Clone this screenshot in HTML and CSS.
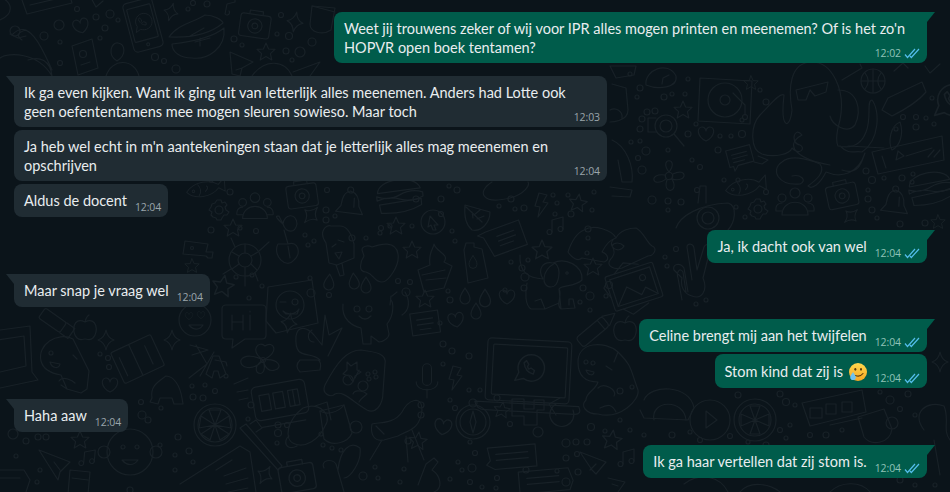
FILE: index.html
```html
<!DOCTYPE html>
<html lang="nl">
<head>
<meta charset="utf-8">
<title>Chat</title>
<link rel="stylesheet" href="styles.css">
</head>
<body>
<svg class="doodles" viewBox="0 0 950 492" aria-hidden="true">
  <defs>
    <path id="star5" d="M0-9 2.6-3 9-2.6 4.4 1.6 5.8 8 0 4.6-5.8 8-4.4 1.6-9-2.6-2.6-3Z"/>
    <path id="star4" d="M0-10Q1.5-2 8 0 1.5 2 0 10-1.5 2-8 0-1.5-2 0-10Z"/>
    <path id="heart" d="M0 7C-10 2-9-7-4-7-2-7 0-5 0-3 0-5 2-7 4-7 9-7 10 2 0 7Z"/>
    <path id="bolt" d="M-2-12 6-10 2-3 7-2-3 12-1 2-6 1Z"/>
    <path id="drop" d="M0-8C3-3 5-1 5 3A5 5 0 0 1-5 3C-5-1-3-3 0-8Z"/>
    <g id="note"><path d="M-4 7V-5L7-8V4"/><circle cx="-6.500" cy="7" r="2.500"/><circle cx="4.500" cy="4" r="2.500"/></g>
    <g id="camera"><rect x="-16" y="-11" width="32" height="24" rx="3"/><path d="M-7-11V-15H7V-11"/><circle cy="1" r="7.500"/><circle cy="1" r="3"/></g>
    <g id="msg"><path d="M-13-10H13V8H-4L-9 13V8H-13Z"/><path d="M-8-4H8M-8 0H8M-8 4H4"/></g>
    <g id="bell"><path d="M0-13C-8-11-8-3-9 2L-14 8 13 10 9 2C9-4 8-11 0-13Z"/><circle cy="-14" r="3"/><path d="M4-6V3"/></g>
    <g id="burger"><path d="M-21-6C-20-20 16-22 20-8Z"/><path d="M-22-3Q-11 2 0-3T22-4L22 0Q11 5 0 1T-22 1Z"/><path d="M-20 5 20 2V8Q4 16-19 13Z"/></g>
    <g id="gear"><circle r="4"/><path d="M-2-10H2L3-7 6-8 8-5 6-3 7 0 10 2 8 5 5 5 3 8 2 10H-2L-3 8-6 7-8 5-7 2-10 0-8-3-7-6-4-7Z"/></g>
    <g id="people"><circle cy="-13" r="5"/><circle cx="-13" cy="-8" r="4"/><circle cx="13" cy="-8" r="4"/><path d="M-13 9C-13-8 13-8 13 9Z"/><path d="M-13 5H-19C-20-2-15-3-13-3M13 5H19C20-2 15-3 13-3"/></g>
    <g id="fish"><path d="M-22 2C-12-10 8-9 16-2L24-9 23 7 16 2C6 12-14 12-22 2Z"/><circle cx="-14" cy="2" r="1.500"/><path d="M-8-5Q-3 2-8 8M2-2Q5 0 0 4"/></g>
    <g id="flower"><circle r="4"/><path d="M0-4C-12-20 12-20 0-4ZM4-2C20-10 20 8 3 3ZM3 3C12 18-8 20-2 4ZM-3 3C-18 14-22-4-4-1Z"/></g>
    <g id="mic"><rect x="-5" y="-18" width="10" height="24" rx="5"/><path d="M-12 2C-12 14 12 14 12 2M0 10V20"/></g>
    <g id="wa"><path d="M-11 11-8 4A11 11 0 1 1-4 9Z"/><path d="M-4-4C-3 2 0 4 4 5L5 2 2 0 0 1-1-1 0-3-2-6Z"/></g>
    <g id="compass"><circle cy="2" r="17"/><circle cy="2" r="13"/><circle cy="-17" r="4"/><path d="M0-9 3 2 0 13-3 2Z"/></g>
    <g id="apple"><path d="M0-6C-12-12-14 4-8 10-5 13-2 11 0 11 2 11 5 13 8 10 14 4 12-12 0-6ZM0-6Q1-11 4-13"/></g>
  </defs>
  <g class="ink">
    <path d="M-2-4C14 2 14 14 0 20M22 0 27 14 72 3 70-4M30 5 60-2M90-4 96 7 103 1"/>
    <path d="M12 35C30 15 45 55 52 70M52 76C38 52 8 52 0 58M26 36 18 38 10 34M26 30C18 32 16 36 22 40M52 76C50 60 40 56 28 60"/>
    <use href="#heart" transform="translate(81 26) rotate(-15)"/>
    <path d="M72 46 92 39 98 68 78 75Z"/><circle cx="83" cy="54" r="3.500"/><path d="M81 65 90 62"/>
    <path d="M117 61C107 55 111 42 118 43 125 44 127 55 117 61ZM106 76C112 58 134 58 139 76"/>
    <g transform="translate(143 25) rotate(-15)"><rect x="-15" y="-25" width="30" height="50" rx="4"/><rect x="-12" y="-19" width="24" height="34" rx="1"/><circle cy="20" r="1.500"/><use href="#wa" transform="translate(0 -3) scale(.75)"/></g>
    <use href="#star4" transform="translate(171 12) rotate(15) scale(.9)"/>
    <path d="M169 37C178 24 195 22 205 15 214 15 222 20 223 23 210 34 190 38 169 37ZM172 44C190 42 212 38 224 28 226 48 208 60 192 58 180 58 172 52 172 44ZM190 36 204 28M195 42 210 38M200 46V38"/>
    <path d="M225 14 227 4 235 2 235-3M225 14A2 2 0 1 0 229 11"/>
    <use href="#camera" transform="translate(255 25) rotate(8) scale(.95)"/>
    <path d="M312 6 335 8 331 30C322 36 310 32 310 24Z"/><path d="M312 6 335 12"/>
    <use href="#star4" transform="translate(295 22) rotate(10)"/>
    <use href="#star5" transform="translate(266 52)"/>
    <path d="M230 52 253 62 242 68 240 76 232 74ZM242 68 236 70"/>
    <path d="M252 76C265 58 285 60 292 76M293 72 320 62 310 76"/>
    <path d="M610 66 636 66 634 75 616 78Z"/><path d="M646 85C644 70 668 60 676 76 678 88 658 90 646 85ZM662 84 663 78 669 75"/>
    <path d="M612 84 626 88 628 110C628 122 610 122 610 122M610 110A8 8 0 0 1 622 118"/>
    <path d="M700 78 752 81 750 124 698 121Z"/><circle cx="725" cy="100" r="17"/><circle cx="725" cy="100" r="5"/><path d="M733 93 745 105V115"/><circle cx="745" cy="117" r="2.500"/>
    <use href="#star5" transform="translate(751 83) scale(.8)"/>
    <use href="#star5" transform="translate(683 110)"/>
    <use href="#heart" transform="translate(706 134)"/>
    <g transform="translate(664 126)"><circle cx="2" r="11"/><circle cx="2" r="6"/><path d="M10 8 20 20M-8-8H-16V6H-8"/><circle cx="-22" cy="-7" r="3"/><circle cx="-17" cy="-14" r="3"/><circle cx="-9" cy="-15" r="3"/><circle cx="-24" cy="3" r="3"/></g>
    <use href="#flower" transform="translate(669 176) scale(.95)"/>
    <path d="M612 140C626 146 634 166 632 182H622L618 160M610 187 632 190 630 197 612 196"/>
    <use href="#msg" transform="translate(740 157) rotate(-15) scale(.95)"/>
    <path d="M758 156 768 160 762 164 754 162"/>
    <use href="#fish" transform="translate(745 186) rotate(-8) scale(.9)"/>
    <use href="#gear" transform="translate(758 209)"/>
    <use href="#people" transform="translate(795 206)"/>
    <use href="#camera" transform="translate(842 195) rotate(-12) scale(.95)"/>
    <use href="#bell" transform="translate(895 203) rotate(3)"/>
    <use href="#star4" transform="translate(851 216) rotate(45) scale(.9)"/>
    <use href="#burger" transform="translate(931 190) rotate(-8)"/>
    <path d="M792 110C788 88 790 62 812 62 832 62 846 90 840 120 836 134 836 142 838 146 848 148 860 148 866 132 872 118 866 100 872 100 880 110 880 140 862 152 854 150 850 156 840 146M792 110C790 130 780 130 784 95 780 92 770 105 760 115 750 126 750 150 762 154 775 158 790 154 792 148 800 156 806 148 800 145 790 144 794 125 802 135 782 146 800 160 830 165"/>
    <path d="M796 90 828 82 826 92 815 96 810 90 806 100 798 100ZM838 90C858 90 862 110 855 125 846 135 832 124 830 116"/>
    <path d="M842 170C860 176 862 160 865 153 858 175 840 178 826 172 820 184 812 190 808 186 816 180 826 172 820 164 806 158 790 155 782 162 770 170 778 186 800 184 808 180 800 174 792 176"/>
    <path d="M848 146 884 148M842 80 862 68 860 64"/>
    <g transform="translate(873 81)"><circle r="12"/><path d="M-12 0H12M0-12V12M-8-8C-4-3-4 3-8 8M8-8C4-3 4 3 8 8"/></g>
    <path d="M882 110 888 98 922 82 926 92C916 104 900 112 892 116Z"/>
    <path d="M900 122C890 126 888 142 892 150 900 146 904 134 900 122Z"/><circle cx="896" cy="129" r="2"/>
    <path d="M872 152 942 136 944 160 878 174ZM882 156 886 168M896 160 904 156 898 151ZM906 156 932 148M928 157 934 150M934 157 940 150"/>
    <use href="#wa" transform="translate(950 100) scale(1.4)"/>
    <path d="M894 71 903 63 908 68M925 66 930 73 940 64"/>
    <use href="#star5" transform="translate(938 222) scale(.8)"/>
    <path d="M676 228C680 216 700 204 728 203 738 206 735 222 728 230M698 203 700 186 706 186 706 203"/><circle cx="708" cy="218" r="11"/><circle cx="708" cy="218" r="6"/>
    <path d="M492 182C476 192 482 205 510 198 525 194 530 185 528 182"/>
    <use href="#fish" transform="translate(205 188) rotate(-8) scale(.85)"/>
    <use href="#people" transform="translate(255 210) scale(.95)"/>
    <use href="#camera" transform="translate(302 195) rotate(-8) scale(.95)"/>
    <use href="#bell" transform="translate(350 204) rotate(3)"/>
    <use href="#burger" transform="translate(400 198) rotate(-5) scale(1.05)"/>
    <use href="#gear" transform="translate(219 210)"/>
    <use href="#star5" transform="translate(233 228)"/>
    <use href="#star4" transform="translate(311 215) rotate(40)"/>
    <g transform="translate(433 222)"><circle r="12"/><path d="M-3-6 5 3 1 3 3 8 0 8-2 3-5 5Z"/></g>
    <use href="#star5" transform="translate(396 226)"/>
    <g transform="translate(245 260)"><circle r="16"/><circle r="7"/><path d="M-6-4-13-8M6-4 13-8M-6 4-13 9M6 4 12 10M0-7V-16M0 7V16M14-9 24-18M-14 9-22 14M-10-13-14-22M10 13 13 21M0 16V26"/></g>
    <path d="M185 241 208 244 206 252 213 252 212 258 208 258 206 256 183 254Z"/><circle cx="192" cy="248" r="1.500"/>
    <path d="M283 224C284 214 296 212 297 224 295 234 286 233 283 224ZM283 224C274 216 276 216 279 216ZM278 244C272 255 286 270 294 260 302 254 298 240 288 244ZM288 244 284 230M288 246 290 258"/>
    <path d="M326 243C318 232 326 224 331 226L340 226C348 226 352 236 354 244L354 258 337 265 329 263ZM336 265 340 276 344 275 342 263M332 247 336 244M338 240 344 242M335 253 342 252 339 259Z"/>
    <path d="M362 250C362 246 368 245 372 247 380 244 396 240 398 254 400 266 388 282 382 282 374 282 374 274 366 272 358 272 360 262 364 256Z"/>
    <use href="#star5" transform="translate(412 250)"/>
    <path d="M430 265C428 252 434 248 434 244 436 252 450 254 444 262L452 266 444 288 424 292 418 270Z"/><path d="M422 275 445 270M426 280 446 278"/>
    <use href="#star5" transform="translate(223 286) rotate(10) scale(1.2)"/>
    <use href="#star5" transform="translate(192 266) scale(.8)"/>
    <g transform="translate(290 305)"><path d="M-22-18 22-25 28 18-14 28-24 16Z"/><circle cy="0" r="14"/><circle cx="5" cy="-3" r="3"/><path d="M-10-3-4-3M-7 6C-3 10 5 10 9 4L7 9H-4Z"/></g>
    <use href="#drop" transform="translate(329 282) rotate(5)"/>
    <use href="#drop" transform="translate(354 281) rotate(-5)"/>
    <use href="#drop" transform="translate(366 285)"/>
    <use href="#star5" transform="translate(425 299)"/>
    <path d="M391 296 390 305M392 296 397 292M405 292C410 300 410 310 402 315"/>
    <path d="M465 205 490 212C490 222 482 232 472 230 466 225 464 215 465 205ZM466 207 482 222M474 215 480 210M477 219 484 216M472 212 473 218"/>
    <use href="#bolt" transform="translate(541 205)"/>
    <use href="#star5" transform="translate(578 203) rotate(8)"/>
    <use href="#note" transform="translate(556 225)"/>
    <g transform="translate(507 238) rotate(-20)"><path d="M-18-13H17V13H-18L-22-8 -27-12Z"/><path d="M-9-5H9M-9 0H9M-9 5H5"/></g>
    <path d="M466 243H474V247L482 249 488 278 468 283 464 250Z"/>
    <use href="#drop" transform="translate(473 262) scale(.8)"/>
    <use href="#star5" transform="translate(542 250) scale(1.1)"/>
    <use href="#drop" transform="translate(465 296)"/>
    <use href="#drop" transform="translate(485 298) scale(1.1)"/>
    <use href="#drop" transform="translate(476 311)"/>
    <use href="#heart" transform="translate(507 297)"/>
    <use href="#heart" transform="translate(456 320) rotate(-10)"/>
    <g transform="translate(565 275)"><path d="M-45-20C-46-2-36 3-22 4M-22 4C-28-6-22-14-12-12 0-18 18-10 17 5 10 12-4 10-6 14-2 20-10 30-4 34L10 33 8 24 4 24 4 30M-6 14-4 34M-38 8C-40 18-40 30-34 34L-20 34-24 24-30 26M-20 34-6 28"/><path d="M-10-12C-3-6-6 12-14 12-24 12-24-4-10-12Z"/><circle cx="2" cy="-2" r="1.200"/></g>
    <use href="#star5" transform="translate(593 267)"/>
    <g transform="translate(616 240)"><path d="M0-2C-4-10-22-16-32-10-42-6-46 6-48 12-44 18-38 22-34 18L-12 22C-6 20-8 14-14 12-12 8-8 0 0-2ZM0-2C4-10 14-12 20-12 28-8 30 2 36 6 42 8 38 16 32 16L6 28C-2 30-10 26-6 20-2 16 0 12-4 6-6 2-2-2 0-2ZM-4 6C0 12 6 10 8 6 4 2-2 2-4 6"/></g>
    <g transform="translate(633 287) rotate(-18)"><rect x="-24" y="-18" width="50" height="36" rx="2"/><rect x="-20" y="-14" width="42" height="28"/><path d="M-20 14-6-2 6 10 12 4 22 14"/><circle cx="12" cy="-6" r="3"/><path d="M-24-12-28-8-24 4M-16 18-8 26 10 20M-14-18-2-26 12-20"/></g>
    <path d="M684 268 688 292M686 292 683 272C680 267 676 272 678 278L682 300M692 280 687 247C687 243 693 243 694 248L697 270 704 247C706 243 710 244 710 250L703 278C708 290 702 300 692 296 684 294 680 286 682 278L674 270C672 264 680 262 684 268"/>
    <path d="M226 305H262Q266 305 266 309V335Q266 339 262 339H245L232 348 233 339H226Q222 339 222 335V309Q222 305 226 305Z"/>
    <path d="M232 315V330M243 315V330M232 322H243M250 315V330M250 311V312"/>
    <circle cx="195" cy="320" r="16"/><use href="#heart" transform="translate(189 316) scale(.5)"/><use href="#heart" transform="translate(201 315) scale(.5)"/><path d="M189 325C194 331 200 330 203 325Z"/>
    <use href="#star4" transform="translate(289 323) rotate(10)"/>
    <path d="M320 360C310 350 294 362 296 336 298 324 308 328 314 335L322 345 325 315 329 335 342 328 328 356M300 360H318Q322 362 320 370L300 372Q294 366 300 360Z"/>
    <path d="M312 330C306 334 308 342 314 342"/>
    <g transform="translate(365 314)"><path d="M-22-10C-24 6-12 12-4 14L-2 30 6 30 6 22 14 28C18 28 24 24 24 20L22 10C30 0 28-12 26-14"/><circle cx="-8" cy="-5" r="3"/><circle cx="4" cy="-5" r="3"/><path d="M-6 2C-2 6 2 6 6 2"/></g>
    <g transform="translate(425 322) rotate(-8)"><path d="M-14-10H14V12H-14Z"/><path d="M-8-3H8M-8 2H8M-6 7H5"/></g>
    <path d="M190 345 208 350 192 355M196 345 207 364 189 378M214 352 200 376M215 360 226 362 227 366"/>
    <path d="M206 374 213 356H219L226 374 220 378 218 371H214L212 378Z"/>
    <g transform="translate(263 360)"><circle r="2.500"/><path d="M0 0C-14-10-4-20 2-14 10-20 18-8 0 0 16-2 20 8 12 10 6 12 2 8 0 0 4 12-2 16-6 12-8 8-6 4 0 0-10 12-24 8-22 0-18-6-8-4 0 0"/></g>
    <use href="#mic" transform="translate(427 380) scale(.9)"/>
    <use href="#bolt" transform="translate(455 378)"/>
    <g transform="translate(355 380)"><path d="M-30 5C-18-18-8-30 6-30 22-28 32-26 30-16L28 12C28 26 20 34 12 30-2 22-12 10-20 14-24 18-34 14-30 5Z"/><path d="M-8-18-4-14 2-18 2-10 6-8 0-4-2 2-6-4-12-6-8-10Z"/><circle cx="-7" cy="0" r="5"/><circle cx="8" cy="6" r="5"/><path d="M-2 14C0 8 10 12 12 14 8 18 6 18 4 22"/><path d="M4-10 0-2"/><circle cx="13" cy="-6" r="2"/><circle cx="20" cy="-8" r="2"/><circle cx="14" cy="-1" r="2"/><circle cx="21" cy="-3" r="2"/></g>
    <g transform="translate(280 400) rotate(-10)"><rect x="-27" y="-17" width="54" height="34" rx="5"/><path d="M-22 24H22"/><path d="M-20-8H-10V8H-20ZM-6-8H4V8H-6ZM9-8H19V8H9ZM14-8V8"/></g>
    <path d="M234 384 248 378M237 392 248 390M239 400 248 398"/>
    <g transform="translate(215 425)"><circle r="21"/><circle r="17"/><path d="M0 0-6-15 6-15ZM0 0 14-9 16 3ZM0 0 14 9 5 15ZM0 0-5 15-14 9ZM0 0-16 3-14-9Z"/></g>
    <g transform="translate(258 448)"><path d="M-18-20-12-24 24 18 20 22Z"/><path d="M-8-24-2-28 4-20-2-16"/></g>
    <g transform="translate(305 432)"><path d="M-2-24C14-30 28-18 20-6 14 8 0 16-10 12-22 8-18-12-2-24ZM-16 4C-22 8-20 20-8 14M10-26 22-30 26-12"/></g>
    <g transform="translate(338 425)"><path d="M-18-14 6-20 14 8C10 18-6 22-14 14Z"/><path d="M-18-14C-12-10 0-12 6-20"/><circle cx="18" cy="2" r="6"/></g>
    <g transform="translate(394 430)"><path d="M-22-6C-24 4-20 12-10 10L4 6C14 0 26 0 28-20 28-36 14-30 8-18 0-6-14-8-22-6ZM-12 10-24 30M30 30 18 0M12 6 14 32M-18-4-10 4"/></g>
    <use href="#star5" transform="translate(418 441) rotate(6)"/>
    <use href="#heart" transform="translate(443 427) rotate(8) scale(1.1)"/>
    <use href="#compass" transform="translate(473 420)"/>
    <path d="M180 484 240 446 250 452 256 492M216 470 232 460M224 476 246 468M226 484 248 478M228 492 248 488"/>
    <use href="#star4" transform="translate(265 475) rotate(30)"/>
    <use href="#camera" transform="translate(297 477) rotate(-10) scale(1.1)"/>
    <path d="M324 468C320 460 332 458 336 464L344 492M338 470C340 450 350 440 360 448 362 462 350 478 344 478"/>
    <path d="M418 485 426 464 434 458 438 462 432 470C440 475 444 488 434 492"/>
    <g transform="translate(530 380) rotate(3)"><rect x="-44" y="-40" width="84" height="62" rx="4"/><rect x="-38" y="-34" width="74" height="50" rx="1"/><path d="M-54 24H50Q54 32 46 32H-44Q-52 32-54 24Z"/><use href="#wa" transform="translate(-2 -12) scale(1.2)"/></g>
    <g transform="translate(595 330) rotate(-40)"><rect x="-20" y="-6" width="34" height="12" rx="3"/><path d="M14-6 26 0 14 6M8-6V6"/></g>
    <use href="#apple" transform="translate(625 329)"/>
    <g transform="translate(600 370)"><path d="M-14 30C-20 36-14 44-2 44 20 50 40 30 38 20 30-2 32-4 18-18 4-30-22-28-22-8-22 4-16 12-2 12-4 20-14 22-14 30ZM14-8 18-18"/><circle cx="-14" cy="-8" r="2"/><circle cx="-7" cy="-7" r="2"/><path d="M-14 0-6 2C-6 6-12 6-14 0ZM6-4 12 0M-2 18C4 12 18 20 14 26M0 38C8 34 12 34 16 42"/></g>
    <use href="#star5" transform="translate(502 410) rotate(8) scale(.9)"/>
    <path d="M512 399H524V409H534V400H544V410H537V425H524V416H512Z"/>
    <path d="M573 410A12 12 0 1 1 556 404M560 398 549 404 556 415"/>
    <g transform="translate(512 456) rotate(-5)"><path d="M-24-10H24V12H-18L-26 7-22 3Z"/><path d="M-16-3H16M-16 3H16"/></g>
    <g transform="translate(543 480) rotate(-5)"><path d="M-24-10H26L30 3 26 12H-24Z"/><path d="M-16-3H16M-16 3H16"/></g>
    <use href="#star5" transform="translate(612 440) rotate(8) scale(1.1)"/>
    <path d="M580 452 606 462 596 474 592 470ZM596 464 590 470"/>
    <use href="#note" transform="translate(627 457)"/>
    <path d="M608 478 625 482 618 492M612 484 618 486"/>
    <path d="M644 400C650 384 690 384 694 408L688 420 644 418 640 410"/><path d="M654 420C650 400 684 398 686 420"/>
    <circle cx="710" cy="420" r="20"/><path d="M706 411 717 420 706 428Z"/>
    <circle cx="755" cy="420" r="21"/><circle cx="755" cy="420" r="16"/><path d="M755 420 750 406H760ZM755 420 769 414 769 426ZM755 420 760 434H750ZM755 420 741 426V414Z"/>
    <path d="M802 403 862 390 866 412 810 426ZM830 425 862 418M810 408H822V418H810ZM826 404H836V414H826ZM842 402H852V412H842Z"/>
    <g transform="translate(872 425)"><path d="M-14-8 12-16 20 4C18 18 0 22-8 12Z"/><circle cx="20" cy="-2" r="6"/></g>
    <path d="M924 430C910 412 928 400 944 406 950 420 942 430 950 440M934 440 940 475"/>
    <use href="#star4" transform="translate(940 362)"/>
    <path d="M684 484C700 472 720 476 728 492M740 492C750 480 770 484 780 492M830 492C840 482 860 480 870 492"/>
    <path d="M0 330 30 326 32 372 38 380 0 388M-2 340 24 336 26 366 0 372"/>
    <g transform="translate(55 322) rotate(35)"><rect x="-16" y="-6" width="26" height="12" rx="2"/><path d="M10-6 20-6 20 6 10 6"/></g>
    <use href="#apple" transform="translate(85 328)"/>
    <use href="#star4" transform="translate(106 340)"/>
    <use href="#star4" transform="translate(172 340)"/>
    <g transform="translate(65 365)"><path d="M-24-4C-28-20-8-34 8-26L14-14 24 6 22 24 16 28 2 24-4 10C-16 8-22 4-24-4ZM2 24-4 20"/><circle cx="-14" cy="-12" r="2"/><path d="M-15-3-5-1C-6 4-13 4-15-3ZM8-10 12-6M-6 16C-2 10 8 16 10 18"/></g>
    <g transform="translate(138 360) rotate(-25)"><rect x="-22" y="-18" width="44" height="34" rx="2"/><path d="M-2-18V16M-16-10V10M12-10 12 10"/></g>
    <use href="#heart" transform="translate(110 385)"/>
    <path d="M152 398C150 386 158 382 166 376 174 376 180 386 182 398L183 404 174 404 172 398 160 398 158 404 150 402Z"/>
    <g transform="translate(130 452)"><circle r="23"/><circle cx="-26" cy="0" r="6"/><circle cx="26" cy="0" r="6"/><circle cx="-7" cy="-5" r="2"/><circle cx="7" cy="-5" r="2"/><path d="M-8 8C-3 14 4 14 8 8Z"/></g>
    <use href="#star5" transform="translate(80 440)"/>
    <path d="M39 450 70 462 60 472 58 480ZM54 462 60 470"/>
    <use href="#note" transform="translate(88 457) rotate(5) scale(.95)"/>
    <path d="M70 470 90 472 88 494 68 494ZM72 478 88 480"/>
    <path d="M0 470H24L30 480 26 492M0 478H20"/>
    <g class="dots">
      <circle cx="15" cy="31" r="5"/><circle cx="44" cy="36" r="4"/><circle cx="59" cy="25" r="5"/><circle cx="77" cy="9" r="2.500"/><circle cx="110" cy="14" r="4"/><circle cx="96" cy="17" r="3"/><circle cx="105" cy="28" r="3"/><circle cx="118" cy="20" r="2"/><circle cx="100" cy="38" r="2"/><circle cx="155" cy="57" r="3.500"/><circle cx="164" cy="61" r="2.500"/><circle cx="176" cy="69" r="4"/><circle cx="193" cy="3" r="2.500"/><circle cx="207" cy="4" r="3"/><circle cx="188" cy="9" r="2"/><circle cx="234" cy="39" r="3"/><circle cx="242" cy="45" r="2"/><circle cx="281" cy="15" r="2.500"/><circle cx="277" cy="34" r="2"/><circle cx="289" cy="36" r="3.500"/><circle cx="312" cy="42" r="4"/><circle cx="286" cy="51" r="3"/><circle cx="300" cy="52" r="5"/><circle cx="292" cy="60" r="2"/><circle cx="60" cy="63" r="2.500"/><circle cx="60" cy="42" r="2"/>
      <circle cx="630" cy="74" r="2"/><circle cx="640" cy="88" r="3"/><circle cx="637" cy="97" r="2"/><circle cx="664" cy="97" r="3"/><circle cx="672" cy="94" r="2"/><circle cx="688" cy="79" r="2"/><circle cx="685" cy="94" r="2"/><circle cx="766" cy="102" r="3"/><circle cx="760" cy="90" r="2"/><circle cx="668" cy="150" r="2"/><circle cx="696" cy="124" r="2"/><circle cx="688" cy="134" r="3"/><circle cx="631" cy="142" r="2"/><circle cx="640" cy="141" r="2"/><circle cx="646" cy="151" r="4"/><circle cx="638" cy="158" r="2.500"/><circle cx="692" cy="160" r="2"/><circle cx="700" cy="167" r="2.500"/><circle cx="718" cy="150" r="3"/><circle cx="731" cy="136" r="2"/><circle cx="720" cy="136" r="2"/><circle cx="742" cy="134" r="3.500"/><circle cx="742" cy="120" r="2"/><circle cx="642" cy="170" r="4"/><circle cx="652" cy="200" r="4"/><circle cx="668" cy="201" r="3"/><circle cx="681" cy="202" r="3"/><circle cx="668" cy="210" r="2"/><circle cx="738" cy="180" r="2"/><circle cx="724" cy="180" r="2"/><circle cx="766" cy="192" r="2.500"/><circle cx="736" cy="207" r="2"/><circle cx="745" cy="217" r="2"/><circle cx="866" cy="171" r="3"/><circle cx="872" cy="180" r="3.500"/><circle cx="884" cy="178" r="2"/><circle cx="868" cy="190" r="2"/><circle cx="868" cy="199" r="3"/><circle cx="872" cy="210" r="3"/><circle cx="877" cy="218" r="2"/><circle cx="903" cy="117" r="2.500"/><circle cx="916" cy="117" r="2.500"/><circle cx="916" cy="127" r="3"/><circle cx="926" cy="118" r="2"/><circle cx="934" cy="124" r="2"/><circle cx="932" cy="98" r="2"/><circle cx="902" cy="178" r="3"/><circle cx="913" cy="174" r="2"/><circle cx="912" cy="182" r="2"/><circle cx="925" cy="223" r="3"/><circle cx="900" cy="224" r="3"/>
      <circle cx="211" cy="230" r="3"/><circle cx="240" cy="228" r="2"/><circle cx="256" cy="231" r="2.500"/><circle cx="211" cy="180" r="2"/><circle cx="230" cy="192" r="3"/><circle cx="327" cy="190" r="2.500"/><circle cx="326" cy="210" r="3"/><circle cx="326" cy="220" r="3"/><circle cx="335" cy="216" r="2"/><circle cx="305" cy="235" r="2"/><circle cx="308" cy="245" r="2"/><circle cx="314" cy="241" r="2"/><circle cx="381" cy="228" r="2.500"/><circle cx="390" cy="226" r="2"/><circle cx="352" cy="238" r="3"/><circle cx="366" cy="238" r="2"/><circle cx="380" cy="233" r="2"/><circle cx="412" cy="226" r="2"/><circle cx="441" cy="214" r="2.500"/><circle cx="457" cy="190" r="3"/><circle cx="449" cy="186" r="2"/><circle cx="441" cy="199" r="3"/><circle cx="416" cy="199" r="3"/><circle cx="452" cy="231" r="2"/><circle cx="455" cy="241" r="2"/><circle cx="252" cy="275" r="2"/><circle cx="311" cy="293" r="4"/><circle cx="310" cy="278" r="2"/><circle cx="329" cy="295" r="2.500"/><circle cx="249" cy="298" r="2"/><circle cx="262" cy="286" r="2"/><circle cx="236" cy="277" r="2"/><circle cx="406" cy="292" r="4"/><circle cx="398" cy="281" r="2.500"/><circle cx="410" cy="282" r="2.500"/><circle cx="448" cy="291" r="2"/><circle cx="450" cy="300" r="3"/>
      <circle cx="499" cy="206" r="2"/><circle cx="511" cy="199" r="3"/><circle cx="515" cy="209" r="2"/><circle cx="524" cy="208" r="3"/><circle cx="553" cy="195" r="2"/><circle cx="555" cy="214" r="2"/><circle cx="557" cy="203" r="2"/><circle cx="568" cy="195" r="2"/><circle cx="571" cy="214" r="3"/><circle cx="588" cy="229" r="3"/><circle cx="588" cy="238" r="2"/><circle cx="592" cy="210" r="2"/><circle cx="594" cy="192" r="2"/><circle cx="522" cy="268" r="3"/><circle cx="505" cy="290" r="2"/><circle cx="525" cy="277" r="4"/><circle cx="524" cy="288" r="3"/><circle cx="511" cy="262" r="2"/><circle cx="528" cy="260" r="2"/><circle cx="587" cy="253" r="2"/><circle cx="583" cy="288" r="3"/><circle cx="590" cy="296" r="4"/><circle cx="580" cy="302" r="2"/><circle cx="590" cy="310" r="2"/><circle cx="609" cy="285" r="3.500"/><circle cx="606" cy="296" r="2"/><circle cx="665" cy="257" r="2"/><circle cx="676" cy="249" r="2.500"/><circle cx="667" cy="266" r="2"/><circle cx="697" cy="190" r="2.500"/><circle cx="706" cy="300" r="2"/><circle cx="696" cy="304" r="2"/>
      <circle cx="440" cy="323" r="2"/><circle cx="452" cy="351" r="3"/><circle cx="443" cy="344" r="3"/><circle cx="443" cy="364" r="2"/><circle cx="469" cy="356" r="3"/><circle cx="469" cy="390" r="2"/><circle cx="480" cy="390" r="2"/><circle cx="497" cy="398" r="3"/><circle cx="510" cy="424" r="2.500"/><circle cx="538" cy="432" r="5"/><circle cx="566" cy="443" r="4"/><circle cx="576" cy="442" r="3"/><circle cx="587" cy="442" r="3"/><circle cx="591" cy="427" r="3.500"/><circle cx="577" cy="454" r="2.500"/><circle cx="566" cy="458" r="3"/><circle cx="470" cy="442" r="2"/><circle cx="475" cy="453" r="2.500"/><circle cx="472" cy="468" r="4"/><circle cx="462" cy="470" r="2"/><circle cx="470" cy="482" r="2.500"/><circle cx="497" cy="478" r="2.500"/><circle cx="482" cy="487" r="2"/><circle cx="496" cy="488" r="2"/><circle cx="526" cy="470" r="3"/><circle cx="557" cy="471" r="2"/><circle cx="566" cy="482" r="4"/><circle cx="578" cy="472" r="3"/><circle cx="605" cy="431" r="2"/><circle cx="632" cy="387" r="2"/><circle cx="620" cy="391" r="3"/><circle cx="630" cy="430" r="2"/><circle cx="620" cy="420" r="2"/>
      <circle cx="13" cy="434" r="5"/><circle cx="26" cy="441" r="3"/><circle cx="38" cy="437" r="3"/><circle cx="46" cy="437" r="3"/><circle cx="16" cy="456" r="2"/><circle cx="40" cy="470" r="2"/><circle cx="37" cy="482" r="2"/><circle cx="100" cy="354" r="2"/><circle cx="108" cy="358" r="2.500"/><circle cx="109" cy="367" r="2.500"/><circle cx="142" cy="415" r="4"/><circle cx="148" cy="420" r="3"/><circle cx="141" cy="402" r="2.500"/><circle cx="161" cy="408" r="2"/><circle cx="160" cy="445" r="2"/><circle cx="178" cy="437" r="3"/><circle cx="175" cy="455" r="2"/><circle cx="189" cy="451" r="3"/><circle cx="193" cy="462" r="2"/><circle cx="175" cy="470" r="2"/><circle cx="130" cy="490" r="3"/>
      <circle cx="205" cy="385" r="2"/><circle cx="193" cy="397" r="3"/><circle cx="203" cy="398" r="3"/><circle cx="192" cy="386" r="2"/><circle cx="215" cy="391" r="2.500"/><circle cx="226" cy="376" r="2"/><circle cx="251" cy="405" r="3"/><circle cx="248" cy="419" r="2"/><circle cx="278" cy="433" r="3.500"/><circle cx="277" cy="443" r="2"/><circle cx="278" cy="425" r="3"/><circle cx="287" cy="425" r="2.500"/><circle cx="321" cy="434" r="2"/><circle cx="323" cy="445" r="2"/><circle cx="332" cy="448" r="2"/><circle cx="341" cy="450" r="2"/><circle cx="363" cy="476" r="4"/><circle cx="375" cy="467" r="2"/><circle cx="378" cy="478" r="2"/><circle cx="404" cy="469" r="2"/><circle cx="400" cy="482" r="2"/><circle cx="408" cy="441" r="3"/><circle cx="421" cy="415" r="3"/><circle cx="421" cy="405" r="3"/><circle cx="450" cy="400" r="2"/><circle cx="455" cy="408" r="2.500"/><circle cx="458" cy="462" r="2"/><circle cx="450" cy="479" r="2"/>
      <circle cx="908" cy="394" r="3"/><circle cx="890" cy="400" r="4"/><circle cx="880" cy="392" r="2"/><circle cx="900" cy="409" r="2.500"/><circle cx="915" cy="415" r="2"/><circle cx="780" cy="394" r="3"/><circle cx="795" cy="405" r="2"/><circle cx="786" cy="402" r="3.500"/><circle cx="780" cy="430" r="2.500"/><circle cx="786" cy="438" r="2"/><circle cx="790" cy="425" r="2"/><circle cx="810" cy="435" r="2.500"/><circle cx="826" cy="435" r="3"/><circle cx="842" cy="430" r="2"/><circle cx="644" cy="435" r="2"/><circle cx="672" cy="435" r="3"/><circle cx="690" cy="432" r="2"/><circle cx="700" cy="440" r="2.500"/><circle cx="738" cy="395" r="3"/><circle cx="730" cy="436" r="2.500"/><circle cx="748" cy="442" r="2"/><circle cx="766" cy="445" r="3"/><circle cx="900" cy="480" r="3"/><circle cx="915" cy="485" r="2"/><circle cx="935" cy="485" r="2"/>
    </g>
  </g>
</svg>
<main class="chat">
  <div class="row row-out">
    <div class="bubble bubble-out tail wide">
      <p class="text">Weet jij trouwens zeker of wij voor IPR alles mogen printen en meenemen? Of is het zo'n HOPVR open boek tentamen?</p>
      <div class="meta meta-under"><span class="time">12:02</span><svg class="ticks" viewBox="0 0 16 11"><path d="M1 6.500 3.500 9.500 11 1M6 8 7.300 9.500 15 1"/></svg></div>
    </div>
  </div>
  <div class="row row-in gap-13">
    <div class="bubble bubble-in tail wide">
      <p class="text">Ik ga even kijken. Want ik ging uit van letterlijk alles meenemen. Anders had Lotte ook geen oefententamens mee mogen sleuren sowieso. Maar toch</p>
      <div class="meta meta-under"><span class="time">12:03</span></div>
    </div>
  </div>
  <div class="row row-in gap-3">
    <div class="bubble bubble-in wide">
      <p class="text">Ja heb wel echt in m'n aantekeningen staan dat je letterlijk alles mag meenemen en opschrijven</p>
      <div class="meta meta-under"><span class="time">12:04</span></div>
    </div>
  </div>
  <div class="row row-in gap-3">
    <div class="bubble bubble-in short">
      <p class="text">Aldus de docent</p>
      <div class="meta"><span class="time">12:04</span></div>
    </div>
  </div>
  <div class="row row-out gap-13">
    <div class="bubble bubble-out tail short">
      <p class="text">Ja, ik dacht ook van wel</p>
      <div class="meta"><span class="time">12:04</span><svg class="ticks" viewBox="0 0 16 11"><path d="M1 6.500 3.500 9.500 11 1M6 8 7.300 9.500 15 1"/></svg></div>
    </div>
  </div>
  <div class="row row-in gap-11">
    <div class="bubble bubble-in tail short">
      <p class="text">Maar snap je vraag wel</p>
      <div class="meta"><span class="time">12:04</span></div>
    </div>
  </div>
  <div class="row row-out gap-12">
    <div class="bubble bubble-out tail short">
      <p class="text">Celine brengt mij aan het twijfelen</p>
      <div class="meta"><span class="time">12:04</span><svg class="ticks" viewBox="0 0 16 11"><path d="M1 6.500 3.500 9.500 11 1M6 8 7.300 9.500 15 1"/></svg></div>
    </div>
  </div>
  <div class="row row-out gap-2">
    <div class="bubble bubble-out short short-emoji">
      <p class="text">Stom kind dat zij is <svg class="emoji" viewBox="0 0 18 18" role="img" aria-label="lachend gezicht met traan"><defs><linearGradient id="face" x1="0" y1="0" x2="0" y2="1"><stop offset="0" stop-color="#ffd84d"/><stop offset="1" stop-color="#f5a623"/></linearGradient></defs><circle cx="9" cy="9" r="9" fill="url(#face)"/><ellipse cx="6.300" cy="6.300" rx="1" ry="1.400" fill="#5b3a0a"/><ellipse cx="12" cy="6.300" rx="1" ry="1.400" fill="#5b3a0a"/><path d="M6.500 12.500Q11 14.300 14 10.500" fill="none" stroke="#5b3a0a" stroke-width="1.100" stroke-linecap="round"/><path d="M4 9C5.500 11.500 6.800 12.800 6.800 14.300A2.800 2.800 0 0 1 1.200 14.300C1.200 12.800 2.500 11.500 4 9Z" fill="#6fc3ee"/></svg></p>
      <div class="meta"><span class="time">12:04</span><svg class="ticks" viewBox="0 0 16 11"><path d="M1 6.500 3.500 9.500 11 1M6 8 7.300 9.500 15 1"/></svg></div>
    </div>
  </div>
  <div class="row row-in gap-11">
    <div class="bubble bubble-in tail short">
      <p class="text">Haha aaw</p>
      <div class="meta"><span class="time">12:04</span></div>
    </div>
  </div>
  <div class="row row-out gap-13">
    <div class="bubble bubble-out tail short">
      <p class="text">Ik ga haar vertellen dat zij stom is.</p>
      <div class="meta"><span class="time">12:04</span><svg class="ticks" viewBox="0 0 16 11"><path d="M1 6.500 3.500 9.500 11 1M6 8 7.300 9.500 15 1"/></svg></div>
    </div>
  </div>
</main>
</body>
</html>
```
FILE: styles.css
```css
* { box-sizing: border-box; }

html, body {
  margin: 0;
  height: 100%;
  overflow: hidden;
  background: #0b141a;
}

body {
  position: relative;
  font-family: "Lato", "Open Sans", sans-serif;
  color: #e9edef;
}

.doodles {
  position: absolute;
  inset: 0;
  width: 950px;
  height: 492px;
}

.ink {
  fill: none;
  stroke: #182127;
  stroke-width: 1.2;
  stroke-linejoin: round;
  stroke-linecap: round;
}

.chat {
  position: relative;
  display: flex;
  flex-direction: column;
  padding: 12px 23px 0 14px;
}

.row { display: flex; }
.row-in { justify-content: flex-start; }
.row-out { justify-content: flex-end; }
.gap-2 { margin-top: 2px; }
.gap-3 { margin-top: 3px; }
.gap-11 { margin-top: 11px; }
.gap-12 { margin-top: 12px; }
.gap-13 { margin-top: 13px; }

.bubble {
  position: relative;
  max-width: 593px;
  border-radius: 8px;
  font-size: 14.500px;
  line-height: 19px;
}

.bubble-in { background: #202c33; }
.bubble-out { background: #005c4b; }

.wide { padding: 7px 10px 6px; }

.short {
  display: flex;
  align-items: flex-end;
  gap: 8px;
  padding: 7px 7px 2px 10px;
  min-height: 33px;
}
.short .text { padding-bottom: 5px; }
.short-emoji { min-height: 34px; }

.tail.bubble-in { border-top-left-radius: 0; }
.tail.bubble-out { border-top-right-radius: 0; }

.tail::after {
  content: "";
  position: absolute;
  top: 0;
  width: 8px;
  height: 10px;
}

.tail.bubble-in::after {
  left: -8px;
  background: #202c33;
  clip-path: polygon(0 0, 100% 0, 100% 100%);
}

.tail.bubble-out::after {
  right: -8px;
  background: #005c4b;
  clip-path: polygon(0 0, 100% 0, 0 100%);
}

.text { margin: 0; }

.meta {
  display: flex;
  align-items: center;
  gap: 3px;
  line-height: 15px;
  flex: none;
}

.meta-under {
  position: absolute;
  right: 7px;
  bottom: 2px;
}

.time {
  font-family: "Open Sans", sans-serif;
  font-size: 10.500px;
  letter-spacing: -.1px;
  color: #9aa5ab;
}

.bubble-out .time { color: #8fc2b8; }

.ticks {
  width: 16px;
  height: 11px;
  fill: none;
  stroke: #53bdeb;
  stroke-width: 1.200;
}

.emoji {
  width: 18px;
  height: 18px;
  vertical-align: -4px;
  margin-left: 2px;
}
```
